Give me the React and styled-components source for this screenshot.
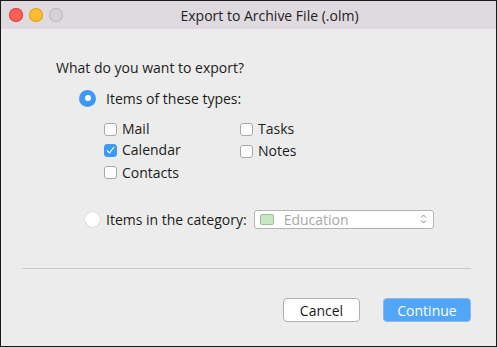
import React from 'react';
import styled, { createGlobalStyle } from 'styled-components';

const Global = createGlobalStyle`
  html, body { margin: 0; padding: 0; background: #ececec; }
  body { font-family: "Open Sans", "Noto Sans", sans-serif; }
`;

const Window = styled.div`
  width: 497px;
  height: 347px;
  box-sizing: border-box;
  border: 1px solid #1a1a1a;
  background: #ececec;
  display: flex;
  flex-direction: column;
  overflow: hidden;
`;

const TitleBar = styled.div`
  height: 28px;
  background: #dfdadf;
  display: flex;
  align-items: center;
  position: relative;
  flex-shrink: 0;
`;

const Lights = styled.div`
  display: flex;
  gap: 6px;
  padding-left: 8px;
`;

const Light = styled.span`
  width: 14px;
  height: 14px;
  border-radius: 50%;
  background: ${p => p.color};
  box-shadow: inset 0 0 0 1px ${p => p.edge};
`;

const Title = styled.div`
  position: absolute;
  left: 0;
  right: 0;
  padding-left: 42px;
  text-align: center;
  font-size: 14px;
  color: #222;
  pointer-events: none;
`;

const Body = styled.div`
  flex: 1;
  display: flex;
  flex-direction: column;
  padding: 29px 25px 0 20px;
  font-size: 14px;
  color: #1c1c1c;
`;

const Question = styled.div`
  line-height: 20px;
  margin-left: 35px;
`;

const RadioRow = styled.label`
  display: flex;
  align-items: center;
  height: 20px;
  margin-top: ${p => p.top}px;
  margin-left: ${p => p.left}px;
  gap: ${p => p.gap}px;
`;

const Radio = styled.span`
  width: ${p => p.size}px;
  height: ${p => p.size}px;
  box-sizing: border-box;
  border-radius: 50%;
  flex-shrink: 0;
  display: flex;
  align-items: center;
  justify-content: center;
  background: ${p => (p.checked ? '#3d99f8' : '#ffffff')};
  box-shadow: ${p => (p.checked ? 'none' : '0 0 0 0.5px #d0d0d0')};
  &::after {
    content: '';
    display: ${p => (p.checked ? 'block' : 'none')};
    width: 6px;
    height: 6px;
    border-radius: 50%;
    background: #fff;
  }
`;

const TypeGrid = styled.div`
  display: grid;
  grid-template-columns: 136px auto;
  grid-template-rows: 20px 20px 20px;
  row-gap: 1px;
  margin: 11px 0 0 83px;
`;

const CheckRow = styled.label`
  display: flex;
  align-items: center;
  gap: 5px;
  line-height: 20px;
  margin-top: ${p => p.shift || 0}px;
`;

const Box = styled.span`
  width: 13px;
  height: 13px;
  box-sizing: border-box;
  border-radius: 3px;
  flex-shrink: 0;
  background: ${p => (p.checked ? '#3d99f8' : '#ffffff')};
  border: 1px solid ${p => (p.checked ? '#3d99f8' : '#a8a8a8')};
  display: flex;
  align-items: center;
  justify-content: center;
`;

const Select = styled.div`
  width: 180px;
  height: 19px;
  box-sizing: border-box;
  border: 1px solid #b4b4b4;
  border-radius: 3px;
  background: #fff;
  display: flex;
  align-items: center;
  padding: 0 6px 0 5px;
  margin-left: 1px;
`;

const Swatch = styled.span`
  width: 14px;
  height: 11px;
  box-sizing: border-box;
  background: #c8e6c2;
  border: 1px solid #9cc394;
  border-radius: 2px;
`;

const SelectText = styled.span`
  flex: 1;
  margin-left: 10px;
  color: #a9a9a9;
`;

const Separator = styled.hr`
  border: none;
  border-top: 1px solid #c9c9c9;
  margin: 39px 0 0 1px;
  width: 449px;
`;

const Buttons = styled.div`
  display: flex;
  justify-content: flex-end;
  gap: 23px;
  margin-top: 29px;
`;

const Button = styled.button`
  height: 24px;
  width: ${p => p.w}px;
  box-sizing: border-box;
  border-radius: 4px;
  font-family: inherit;
  font-size: 14px;
  padding: 0;
  border: 1px solid ${p => (p.primary ? '#8fb6de' : '#b0b0b0')};
  background: ${p => (p.primary ? '#52a6fa' : '#ffffff')};
  color: ${p => (p.primary ? '#ffffff' : '#1c1c1c')};
`;

const Check = () => (
  <svg width="9" height="8" viewBox="0 0 9 8">
    <path d="M1 4.5 L3.5 7 L8 1" fill="none" stroke="#fff" strokeWidth="1.1" />
  </svg>
);

const Chevrons = () => (
  <svg width="7" height="12" viewBox="0 0 7 12">
    <path d="M1 4.5 L3.5 2 L6 4.5 M1 7.5 L3.5 10 L6 7.5" fill="none" stroke="#8a8a8a" strokeWidth="1" />
  </svg>
);

const types = [
  ['Mail', false, 0],
  ['Tasks', false, 0],
  ['Calendar', true, 0],
  ['Notes', false, 2],
  ['Contacts', false, 3],
];

export default function App() {
  return (
    <Window>
      <Global />
      <TitleBar>
        <Lights>
          <Light color="#fe5f57" edge="#e0443e" />
          <Light color="#febc2e" edge="#dea123" />
          <Light color="#d4d2d4" edge="#bdbbbd" />
        </Lights>
        <Title>Export to Archive File (.olm)</Title>
      </TitleBar>
      <Body>
        <Question>What do you want to export?</Question>
        <RadioRow top={10} left={58} gap={10}>
          <Radio checked size={17} />
          Items of these types:
        </RadioRow>
        <TypeGrid>
          {types.map(([name, checked, shift]) => (
            <CheckRow key={name} shift={shift}>
              <Box checked={checked}>{checked && <Check />}</Box>
              {name}
            </CheckRow>
          ))}
        </TypeGrid>
        <RadioRow top={28} left={64} gap={6}>
          <Radio size={15} />
          Items in the category:
          <Select>
            <Swatch />
            <SelectText>Education</SelectText>
            <Chevrons />
          </Select>
        </RadioRow>
        <Separator />
        <Buttons>
          <Button w={77}>Cancel</Button>
          <Button primary w={88}>Continue</Button>
        </Buttons>
      </Body>
    </Window>
  );
}
